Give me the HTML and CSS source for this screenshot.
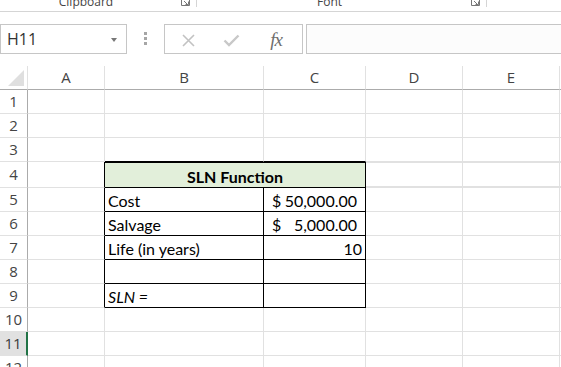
FILE: index.html
```html
<!DOCTYPE html>
<html lang="en">
  <head>
    <meta charset="UTF-8" />
    <meta name="viewport" content="width=device-width, initial-scale=1.0" />
    <title>SLN Function - Excel</title>
    <link rel="stylesheet" href="styles.css">
  </head>
  <body>
    <!-- bottom edge of the ribbon -->
    <div class="ribbon">
      <div class="group group-clipboard">
        <span class="group-label">Clipboard</span>
        <svg class="launcher" viewBox="0 3 9 6" width="9" height="6">
          <path d="M0.5 3 V8.5 H8.5 V3" fill="none" stroke="#777" stroke-width="1" />
          <path d="M3 4 L7 8 M4.5 7.5 H7.5 V4.5" fill="none" stroke="#777" stroke-width="1" />
        </svg>
      </div>
      <div class="group group-font">
        <span class="group-label">Font</span>
        <svg class="launcher" viewBox="0 3 9 6" width="9" height="6">
          <path d="M0.5 3 V8.5 H8.5 V3" fill="none" stroke="#777" stroke-width="1" />
          <path d="M3 4 L7 8 M4.5 7.5 H7.5 V4.5" fill="none" stroke="#777" stroke-width="1" />
        </svg>
      </div>
    </div>

    <!-- name box + formula bar -->
    <div class="formula-bar">
      <div class="name-box">
        <span>H11</span>
        <span class="caret"></span>
      </div>
      <div class="grip"><i></i><i></i><i></i></div>
      <div class="fx-box">
        <span class="fx-slot slot-cancel">
          <svg viewBox="0 0 13 13" width="13" height="13">
            <path d="M1 1 L12 12 M12 1 L1 12" stroke="#c2c2c2" stroke-width="1.6" fill="none" />
          </svg>
        </span>
        <span class="fx-slot slot-enter">
          <svg viewBox="0 0 17 13" width="17" height="13">
            <path d="M1.5 6.5 L6 11 L15.5 1.5" stroke="#c8c8c8" stroke-width="2.4" fill="none" />
          </svg>
        </span>
        <span class="fx-slot slot-fx">fx</span>
      </div>
      <div class="formula-input"></div>
    </div>

    <!-- worksheet -->
    <div class="sheet">
      <div class="cell corner"><span class="corner-mark"></span></div>
      <div class="cell col-head">A</div>
      <div class="cell col-head">B</div>
      <div class="cell col-head">C</div>
      <div class="cell col-head">D</div>
      <div class="cell col-head">E</div>
      <div class="cell col-head"></div>

      <div class="cell row-head">1</div>
      <div class="cell"></div><div class="cell"></div><div class="cell"></div>
      <div class="cell"></div><div class="cell"></div><div class="cell"></div>

      <div class="cell row-head">2</div>
      <div class="cell"></div><div class="cell"></div><div class="cell"></div>
      <div class="cell"></div><div class="cell"></div><div class="cell"></div>

      <div class="cell row-head">3</div>
      <div class="cell"></div>
      <div class="cell tb-above"></div>
      <div class="cell tb-above"></div>
      <div class="cell"></div><div class="cell"></div><div class="cell"></div>

      <div class="cell row-head">4</div>
      <div class="cell tb-before"></div>
      <div class="cell tb title">SLN Function</div>
      <div class="cell band"></div>
      <div class="cell band"></div>
      <div class="cell band"></div>

      <div class="cell row-head">5</div>
      <div class="cell tb-before"></div>
      <div class="cell tb">Cost</div>
      <div class="cell tb money"><span>$</span><span>50,000.00</span></div>
      <div class="cell"></div><div class="cell"></div><div class="cell"></div>

      <div class="cell row-head">6</div>
      <div class="cell tb-before"></div>
      <div class="cell tb">Salvage</div>
      <div class="cell tb money"><span>$</span><span>5,000.00</span></div>
      <div class="cell"></div><div class="cell"></div><div class="cell"></div>

      <div class="cell row-head">7</div>
      <div class="cell tb-before"></div>
      <div class="cell tb">Life (in years)</div>
      <div class="cell tb num">10</div>
      <div class="cell"></div><div class="cell"></div><div class="cell"></div>

      <div class="cell row-head">8</div>
      <div class="cell tb-before"></div>
      <div class="cell tb"></div>
      <div class="cell tb"></div>
      <div class="cell"></div><div class="cell"></div><div class="cell"></div>

      <div class="cell row-head">9</div>
      <div class="cell tb-before"></div>
      <div class="cell tb formula-label">SLN =</div>
      <div class="cell tb"></div>
      <div class="cell"></div><div class="cell"></div><div class="cell"></div>

      <div class="cell row-head">10</div>
      <div class="cell"></div><div class="cell"></div><div class="cell"></div>
      <div class="cell"></div><div class="cell"></div><div class="cell"></div>

      <div class="cell row-head active">11</div>
      <div class="cell"></div><div class="cell"></div><div class="cell"></div>
      <div class="cell"></div><div class="cell"></div><div class="cell"></div>

      <div class="cell row-head">12</div>
      <div class="cell"></div><div class="cell"></div><div class="cell"></div>
      <div class="cell"></div><div class="cell"></div><div class="cell"></div>
    </div>
  </body>
</html>
```

FILE: styles.css
```css
html,
body {
  margin: 0;
  background-color: white;
  font-family: "Open Sans", "Noto Sans", sans-serif;
}

body {
  width: 561px;
  height: 367px;
  overflow: hidden;
}

/* ribbon strip */
.ribbon {
  display: flex;
  height: 11px;
  border-bottom: 1px solid #d5d5d5;
  overflow: hidden;
}

.group {
  display: flex;
  align-items: flex-end;
  height: 7px;
  border-right: 1px solid #d5d5d5;
}

.group-clipboard {
  width: 196px;
}

.group-font {
  width: 289px;
}

.group-label {
  flex: 1;
  margin-bottom: -3px;
  text-align: center;
  font-size: 12px;
  line-height: 16px;
  color: #444;
}

.launcher {
  display: block;
  margin: 0 6px 1px 9px;
}

/* formula bar */
.formula-bar {
  display: flex;
  height: 54px;
  padding-top: 12px;
  box-sizing: border-box;
}

.name-box {
  display: flex;
  align-items: center;
  width: 127px;
  height: 30px;
  padding-left: 6px;
  border: 1px solid #c6c6c6;
  box-sizing: border-box;
  font-size: 16px;
  color: #333;
}

.caret {
  margin-left: auto;
  margin-right: 9px;
  margin-top: 2px;
  border-top: 4px solid #777;
  border-left: 3.5px solid transparent;
  border-right: 3.5px solid transparent;
}

.grip {
  display: flex;
  flex-direction: column;
  gap: 2px;
  margin-left: 17px;
  padding-top: 8px;
}

.grip i {
  display: block;
  width: 3px;
  height: 3px;
  background-color: #a6a6a6;
}

.fx-box {
  display: flex;
  align-items: center;
  width: 139px;
  height: 30px;
  margin-left: 17px;
  border: 1px solid #c6c6c6;
  box-sizing: border-box;
}

.fx-slot {
  display: flex;
  justify-content: center;
  align-items: center;
  padding-top: 2px;
}

.fx-slot svg {
  display: block;
}

.slot-cancel {
  width: 48px;
}

.slot-enter {
  width: 38px;
}

.slot-fx {
  width: 52px;
  font-family: "Liberation Serif", "DejaVu Serif", serif;
  font-style: italic;
  font-size: 19px;
  color: #6e6e6e;
  letter-spacing: -1px;
}

.formula-input {
  flex: 1;
  height: 30px;
  margin-left: 3px;
  border: 1px solid #c6c6c6;
  border-right: none;
  box-sizing: border-box;
  background-color: #fcfcfc;
}

/* worksheet grid */
.sheet {
  display: grid;
  grid-template-columns: 28px 77px 159px 102px 97px 97px 1fr;
  grid-template-rows: 24px 24px 24px 24px 26px repeat(8, 24px);
}

.cell {
  display: flex;
  align-items: flex-end;
  padding: 0 3px 1px;
  border-right: 1px solid #e1e1e1;
  border-bottom: 1px solid #e1e1e1;
  box-sizing: border-box;
  font-family: Lato, "Liberation Sans", sans-serif;
  font-size: 16px;
  line-height: 19px;
  color: #000;
  white-space: nowrap;
  overflow: hidden;
}

.corner {
  position: relative;
  border-bottom-color: #ababab;
}

.corner-mark {
  position: absolute;
  left: 8px;
  top: 4px;
  width: 16px;
  height: 16px;
  background-color: #dfdfdf;
  clip-path: polygon(100% 0, 100% 100%, 0 100%);
}

.col-head {
  justify-content: center;
  align-items: center;
  padding: 0;
  border-bottom-color: #ababab;
  font-family: "Open Sans", "Noto Sans", sans-serif;
  font-size: 15px;
  color: #444;
}

.row-head {
  justify-content: center;
  align-items: center;
  padding: 0;
  border-right-color: #ababab;
  font-family: "Open Sans", "Noto Sans", sans-serif;
  font-size: 15px;
  color: #444;
}

.row-head.active {
  background-color: #e1e1e1;
  border-right: 2px solid #217346;
  color: #3a3a3a;
}

/* the bordered SLN block */
.tb-above {
  border-bottom-color: #000;
}

.tb-before {
  border-right-color: #000;
}

.tb {
  border-right-color: #000;
  border-bottom-color: #000;
}

.title {
  grid-column: span 2;
  justify-content: center;
  border-top: 1px solid #000;
  background-color: #e2efda;
  font-weight: bold;
}

.band {
  box-shadow: inset 0 1px #e1e1e1, inset 0 -1px #e1e1e1;
}

.money {
  justify-content: space-between;
  padding-left: 8px;
  padding-right: 8px;
}

.num {
  justify-content: flex-end;
}

.formula-label {
  font-style: italic;
}
```
